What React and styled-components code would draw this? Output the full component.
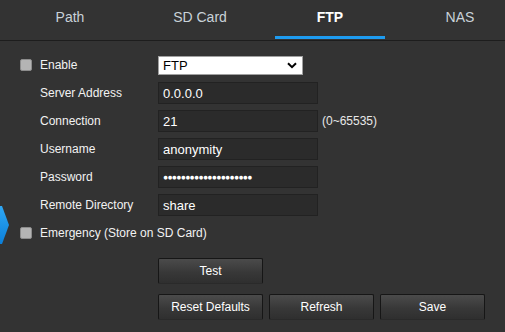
import React from 'react'
import styled, { createGlobalStyle } from 'styled-components'

const Global = createGlobalStyle`
body {
  margin: 0;
  background: #333333;
  font-family: "Liberation Sans", Arial, sans-serif;
}
`

const Page = styled.div`
position: relative;
width: 505px;
height: 332px;
overflow: hidden;
background: #333333;
`

const TabBar = styled.div`
display: flex;
padding-left: 5px;
height: 40px;
border-bottom: 1px solid #1d1d1d;
`

const Tab = styled.div`
position: relative;
flex: 0 0 130px;
display: flex;
align-items: center;
justify-content: center;
padding-bottom: 6px;
box-sizing: border-box;
font-size: 14px;
color: ${p => (p.active ? '#ffffff' : '#c9d2d9')};
font-weight: ${p => (p.active ? 'bold' : 'normal')};
&::after {
  content: '';
  display: ${p => (p.active ? 'block' : 'none')};
  position: absolute;
  left: 10px;
  right: 10px;
  bottom: 1px;
  height: 3px;
  background: #1e9bef;
}
`

const Form = styled.div`
display: flex;
flex-direction: column;
padding-top: 10px;
`

const Row = styled.div`
display: flex;
align-items: center;
height: 28px;
padding-left: ${p => (p.check ? '20px' : '40px')};
gap: 8px;
`

const Check = styled.div`
width: 10px;
height: 10px;
background: #b4b4b4;
border: 1px solid #8c8c8c;
border-radius: 2px;
`

const Label = styled.div`
width: 110px;
font-size: 12px;
color: #f2f2f2;
white-space: nowrap;
`

const SelectBox = styled.div`
position: relative;
width: 139px;
height: 17px;
background: #ffffff;
border: 1px solid #a0a0a0;
display: flex;
align-items: center;
padding-left: 4px;
box-sizing: content-box;
font-size: 13px;
color: #000;
`

const Chevron = styled.svg`
position: absolute;
right: 5px;
top: 5px;
`

const Field = styled.div`
width: 154px;
height: 20px;
padding-left: 4px;
background: #2b2b2b;
border: 1px solid #222222;
display: flex;
align-items: center;
font-size: 13px;
color: #ffffff;
`

const Dots = styled.span`
font-size: 8.5px;
letter-spacing: -0.7px;
`

const Hint = styled.div`
font-size: 12px;
color: #e8e8e8;
margin-left: -4px;
`

const ButtonRow = styled.div`
display: flex;
gap: 6px;
padding-left: 158px;
margin-top: ${p => p.top}px;
`

const Button = styled.div`
width: 103px;
height: 24px;
display: flex;
align-items: center;
justify-content: center;
font-size: 12px;
color: #ffffff;
background: linear-gradient(#4b4b4b, #383838 55%, #2f2f2f);
border: 1px solid #161616;
border-bottom-color: #2a2a2a;
border-radius: 2px;
`

const SideTab = styled.svg`
position: absolute;
left: 0;
top: 205px;
`

const tabs = ['Path', 'SD Card', 'FTP', 'NAS']

const fields = [
  ['Server Address', '0.0.0.0'],
  ['Connection', '21', '(0~65535)'],
  ['Username', 'anonymity'],
  ['Password', null],
  ['Remote Directory', 'share'],
]

export default function App() {
  return (
    <Page>
      <Global />
      <TabBar>
        {tabs.map(t => (
          <Tab key={t} active={t === 'FTP'}>{t}</Tab>
        ))}
      </TabBar>
      <Form>
        <Row check>
          <Check />
          <Label>Enable</Label>
          <SelectBox>
            FTP
            <Chevron width="10" height="7" viewBox="0 0 10 7">
              <path d="M1 1.2 L5 5.2 L9 1.2" fill="none" stroke="#000" strokeWidth="2" />
            </Chevron>
          </SelectBox>
        </Row>
        {fields.map(([label, value, hint]) => (
          <Row key={label}>
            <Label>{label}</Label>
            <Field>
              {value === null ? <Dots>{'●'.repeat(20)}</Dots> : value}
            </Field>
            {hint && <Hint>{hint}</Hint>}
          </Row>
        ))}
        <Row check>
          <Check />
          <Label>Emergency (Store on SD Card)</Label>
        </Row>
        <ButtonRow top={11}>
          <Button>Test</Button>
        </ButtonRow>
        <ButtonRow top={10}>
          <Button>Reset Defaults</Button>
          <Button>Refresh</Button>
          <Button>Save</Button>
        </ButtonRow>
      </Form>
      <SideTab width="10" height="40" viewBox="0 0 10 40">
        <defs>
          <linearGradient id="sideg" x1="0" y1="0" x2="0" y2="1">
            <stop offset="0" stopColor="#2fa8f5" />
            <stop offset="1" stopColor="#0b7fd9" />
          </linearGradient>
        </defs>
        <polygon points="0,1 2,1 9,20 2,39 0,39" fill="url(#sideg)" />
      </SideTab>
    </Page>
  )
}
